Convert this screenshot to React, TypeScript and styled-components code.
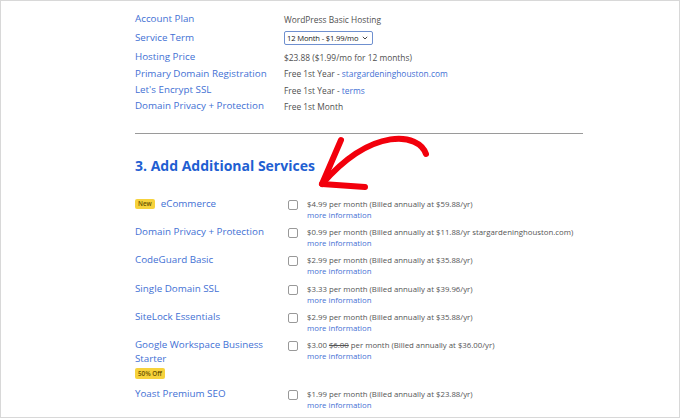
import React from 'react';
import styled, { createGlobalStyle } from 'styled-components';

const GlobalStyle = createGlobalStyle`
  html, body {
    margin: 0;
    padding: 0;
    background: #fff;
  }
  body {
    font-family: 'Open Sans', 'Noto Sans', sans-serif;
  }
`;

const Frame = styled.div`
  position: relative;
  width: 680px;
  height: 418px;
  box-sizing: border-box;
  border: 1px solid #d8d8d8;
  overflow: hidden;
  background: #fff;
`;

const Content = styled.div`
  width: 448px;
  padding: 10px 0 0 134px;
`;

const SummaryRow = styled.div<{ $h?: number }>`
  display: grid;
  grid-template-columns: 149px 1fr;
  align-items: center;
  height: ${(p) => p.$h ?? 16}px;
`;

const Label = styled.div`
  font-size: 9.8px;
  color: #3f70d4;
  line-height: 14px;
  white-space: nowrap;
`;

const Value = styled.div`
  font-size: 8.4px;
  color: #505050;
  white-space: nowrap;
`;

const Link = styled.a`
  color: #3f70d4;
  text-decoration: none;
`;

const SelectBox = styled.div`
  display: flex;
  align-items: center;
  justify-content: space-between;
  width: 89px;
  height: 14px;
  box-sizing: border-box;
  border: 1px solid #6f90cf;
  border-radius: 2px;
  padding: 0 4px 0 2px;
  font-size: 7.6px;
  letter-spacing: -0.15px;
  color: #222;
  background: #fff;
  white-space: nowrap;

  svg {
    flex-shrink: 0;
  }
`;

const Divider = styled.hr`
  margin: 19px 0 0;
  border: none;
  border-top: 1px solid #9a9a9a;
`;

const Heading = styled.h2`
  margin: 22px 0 0;
  font-size: 14px;
  line-height: 20px;
  font-weight: 700;
  color: #1f5fd2;
`;

const ServiceList = styled.div`
  margin-top: 21px;
`;

const ServiceRow = styled.div<{ $gap?: number }>`
  display: grid;
  grid-template-columns: 153px 1fr;
  align-items: start;
  padding-bottom: ${(p) => p.$gap ?? 4.2}px;
`;

const ServiceName = styled.div`
  display: flex;
  flex-direction: column;
  align-items: flex-start;
`;

const NameLine = styled.div`
  display: flex;
  align-items: center;
  gap: 6px;
`;

const Badge = styled.span<{ $block?: boolean }>`
  display: inline-block;
  background: #f6d23c;
  color: #6b5200;
  font-size: 6.3px;
  font-weight: 600;
  line-height: ${(p) => (p.$block ? '11px' : '10px')};
  height: ${(p) => (p.$block ? '11px' : '10px')};
  padding: 0 3px;
  border-radius: 2px;
  margin-top: ${(p) => (p.$block ? '2px' : '0')};
`;

const Option = styled.div`
  display: flex;
  align-items: flex-start;
  gap: 9px;
  padding-top: 2px;
`;

const Checkbox = styled.span`
  display: block;
  width: 10px;
  height: 10px;
  box-sizing: border-box;
  border: 1px solid #999;
  border-radius: 2px;
  margin-top: 1px;
  background: #fff;
`;

const OptionText = styled.div`
  font-size: 7.8px;
  line-height: 11px;
  color: #555;
  white-space: nowrap;
`;

const Strike = styled.span`
  text-decoration: line-through;
`;

const MoreInfo = styled.a`
  display: block;
  color: #3f70d4;
  text-decoration: none;
`;

const ArrowLayer = styled.svg`
  position: absolute;
  left: 0;
  top: 0;
  pointer-events: none;
`;

const summary = [
  { label: 'Account Plan', value: <>WordPress Basic Hosting</> },
  { label: 'Service Term', select: '12 Month - $1.99/mo', h: 22 },
  { label: 'Hosting Price', value: <>$23.88 ($1.99/mo for 12 months)</> },
  {
    label: 'Primary Domain Registration',
    h: 17,
    value: (
      <>
        Free 1st Year - <Link href="#">stargardeninghouston.com</Link>
      </>
    ),
  },
  {
    label: "Let's Encrypt SSL",
    value: (
      <>
        Free 1st Year - <Link href="#">terms</Link>
      </>
    ),
  },
  { label: 'Domain Privacy + Protection', value: <>Free 1st Month</> },
];

type Service = {
  name: string[];
  badge?: string;
  badgeBelow?: string;
  price: React.ReactNode;
  gap?: number;
};

const services: Service[] = [
  { name: ['eCommerce'], badge: 'New', price: '$4.99 per month (Billed annually at $59.88/yr)' },
  {
    name: ['Domain Privacy + Protection'],
    price: '$0.99 per month (Billed annually at $11.88/yr stargardeninghouston.com)',
  },
  { name: ['CodeGuard Basic'], price: '$2.99 per month (Billed annually at $35.88/yr)' },
  { name: ['Single Domain SSL'], price: '$3.33 per month (Billed annually at $39.96/yr)' },
  { name: ['SiteLock Essentials'], price: '$2.99 per month (Billed annually at $35.88/yr)' },
  {
    name: ['Google Workspace Business', 'Starter'],
    badgeBelow: '50% Off',
    gap: 8,
    price: (
      <>
        $3.00 <Strike>$6.00</Strike> per month (Billed annually at $36.00/yr)
      </>
    ),
  },
  { name: ['Yoast Premium SEO'], price: '$1.99 per month (Billed annually at $23.88/yr)' },
];

const Chevron = () => (
  <svg width="6" height="4" viewBox="0 0 6 4">
    <path d="M0.8 0.8 L3 3 L5.2 0.8" fill="none" stroke="#444" strokeWidth="1" />
  </svg>
);

export default function App() {
  return (
    <>
      <GlobalStyle />
      <Frame>
        <Content>
          {summary.map((row) => (
            <SummaryRow key={row.label} $h={row.h}>
              <Label>{row.label}</Label>
              {row.select ? (
                <SelectBox>
                  <span>{row.select}</span>
                  <Chevron />
                </SelectBox>
              ) : (
                <Value>{row.value}</Value>
              )}
            </SummaryRow>
          ))}
          <Divider />
          <Heading>3. Add Additional Services</Heading>
          <ServiceList>
            {services.map((s) => (
              <ServiceRow key={s.name.join(' ')} $gap={s.gap}>
                <ServiceName>
                  {s.name.map((line, i) => (
                    <NameLine key={line}>
                      {i === 0 && s.badge && <Badge>{s.badge}</Badge>}
                      <Label>{line}</Label>
                    </NameLine>
                  ))}
                  {s.badgeBelow && <Badge $block>{s.badgeBelow}</Badge>}
                </ServiceName>
                <Option>
                  <Checkbox />
                  <OptionText>
                    {s.price}
                    <MoreInfo href="#">more information</MoreInfo>
                  </OptionText>
                </Option>
              </ServiceRow>
            ))}
          </ServiceList>
        </Content>
        <ArrowLayer width="680" height="418" viewBox="0 0 680 418">
          <g fill="none" stroke="#f2000c" strokeLinecap="round" strokeLinejoin="round">
            <path d="M425 153 C418 132, 372 125, 321 183" strokeWidth="6" />
            <path d="M340 139 L321 183 L364 186" strokeWidth="6" />
          </g>
        </ArrowLayer>
      </Frame>
    </>
  );
}
